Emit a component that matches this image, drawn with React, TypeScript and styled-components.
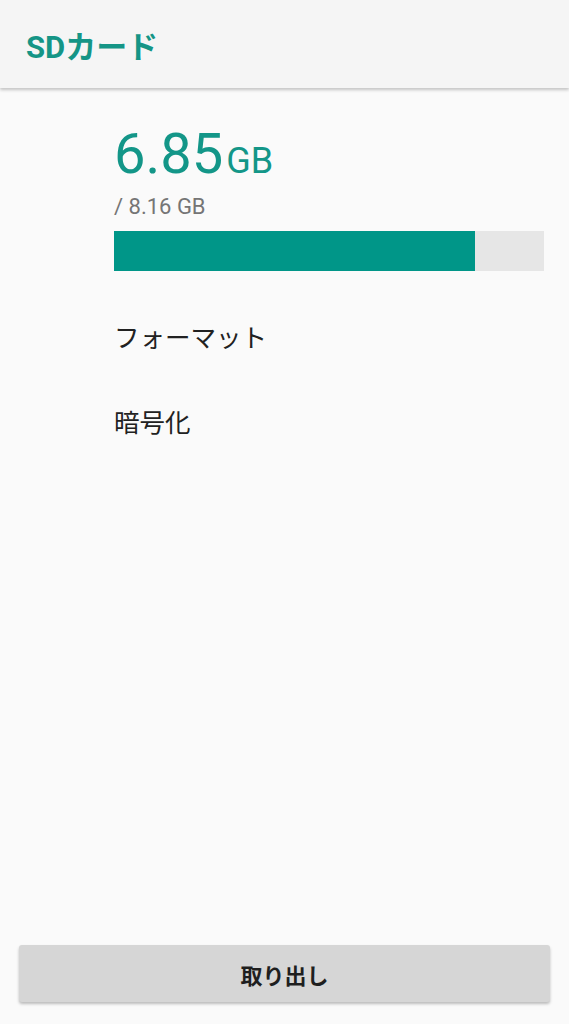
import React from "react";
import styled, { createGlobalStyle } from "styled-components";

const Global = createGlobalStyle`
  html, body { margin: 0; padding: 0; background: #fafafa; }
  body { font-family: Roboto, "Noto Sans CJK JP", sans-serif; }
`;

const Page = styled.div`
  width: 569px;
  height: 1024px;
  display: flex;
  flex-direction: column;
  background: #fafafa;
  overflow: hidden;
`;

const Toolbar = styled.header`
  height: 88px;
  flex: none;
  background: #f5f5f5;
  box-shadow: 0 2px 3px rgba(0, 0, 0, 0.22);
  display: flex;
  align-items: center;
  padding-left: 26px;
  position: relative;
  z-index: 1;
`;

const Title = styled.h1`
  margin: 0;
  font-family: Roboto, "Noto Sans CJK JP", sans-serif;
  font-weight: 700;
  font-size: 31px;
  color: #159586;
  letter-spacing: 0;
`;

const Content = styled.main`
  flex: 1;
  display: flex;
  flex-direction: column;
  padding: 44px 25px 0 114px;
`;

const Used = styled.div`
  display: flex;
  align-items: baseline;
  color: #139688;
  line-height: 44px;
  height: 44px;
`;

const UsedNum = styled.span`
  font-size: 56px;
  font-weight: 400;
`;

const UsedUnit = styled.span`
  font-size: 36px;
  margin-left: 3px;
`;

const Total = styled.div`
  margin-top: 20px;
  font-size: 22px;
  color: #757575;
  line-height: 1;
`;

const Bar = styled.div`
  margin-top: 13px;
  height: 40px;
  width: 430px;
  background: #e6e6e6;
  display: flex;
`;

const Fill = styled.div`
  background: #009688;
  height: 100%;
`;

const Item = styled.div`
  font-family: "Noto Sans CJK JP", sans-serif;
  font-size: 25.5px;
  color: #212121;
  height: 85px;
  display: flex;
  align-items: center;
`;

const Items = styled.div`
  margin-top: 22px;
  display: flex;
  flex-direction: column;
`;

const Footer = styled.div`
  padding: 0 19px 22px 19px;
`;

const Button = styled.button`
  width: 100%;
  height: 57px;
  border: none;
  border-radius: 3px;
  background: #d6d6d6;
  box-shadow: 0 2px 3px rgba(0, 0, 0, 0.25);
  font-family: "Noto Sans CJK JP", sans-serif;
  font-weight: 700;
  font-size: 22px;
  color: #1f1f1f;
`;

export default function App() {
  const fillRatio = 361 / 430;
  return (
    <Page>
      <Global />
      <Toolbar>
        <Title>SDカード</Title>
      </Toolbar>
      <Content>
        <Used>
          <UsedNum>6.85</UsedNum>
          <UsedUnit>GB</UsedUnit>
        </Used>
        <Total>/ 8.16 GB</Total>
        <Bar>
          <Fill style={{ width: `${fillRatio * 100}%` }} />
        </Bar>
        <Items>
          <Item>フォーマット</Item>
          <Item>暗号化</Item>
        </Items>
      </Content>
      <Footer>
        <Button>取り出し</Button>
      </Footer>
    </Page>
  );
}
